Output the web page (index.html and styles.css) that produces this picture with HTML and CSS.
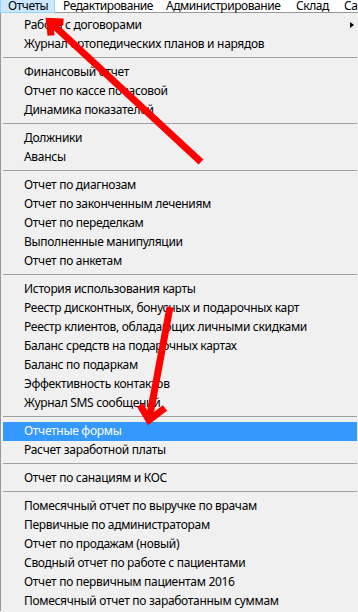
FILE: index.html
```html
<!DOCTYPE html>
<html lang="ru">
<head>
    <meta charset="UTF-8">
    <meta name="viewport" content="width=device-width, initial-scale=1.0">
    <title>Отчеты</title>
    <link rel="stylesheet" href="styles.css">
</head>
<body>
    <div class="screen">
        <div class="menubar">
            <div class="top-item active">Отчеты</div>
            <div class="top-item edit">Редактирование</div>
            <div class="top-item admin">Администрирование</div>
            <div class="top-item store">Склад</div>
            <div class="top-item">Сайт</div>
        </div>

        <div class="dropdown">
            <div class="item sub">Работа с договорами</div>
            <div class="item">Журнал ортопедических планов и нарядов</div>
            <div class="sep"></div>
            <div class="item">Финансовый отчет</div>
            <div class="item">Отчет по кассе почасовой</div>
            <div class="item">Динамика показателей</div>
            <div class="sep"></div>
            <div class="item">Должники</div>
            <div class="item">Авансы</div>
            <div class="sep"></div>
            <div class="item">Отчет по диагнозам</div>
            <div class="item">Отчет по законченным лечениям</div>
            <div class="item">Отчет по переделкам</div>
            <div class="item">Выполненные манипуляции</div>
            <div class="item">Отчет по анкетам</div>
            <div class="sep"></div>
            <div class="item">История использования карты</div>
            <div class="item">Реестр дисконтных, бонусных и подарочных карт</div>
            <div class="item">Реестр клиентов, обладающих личными скидками</div>
            <div class="item">Баланс средств на подарочных картах</div>
            <div class="item">Баланс по подаркам</div>
            <div class="item">Эффективность контактов</div>
            <div class="item">Журнал SMS сообщений</div>
            <div class="sep"></div>
            <div class="item selected">Отчетные формы</div>
            <div class="item">Расчет заработной платы</div>
            <div class="sep"></div>
            <div class="item">Отчет по санациям и КОС</div>
            <div class="sep"></div>
            <div class="item">Помесячный отчет по выручке по врачам</div>
            <div class="item">Первичные по администраторам</div>
            <div class="item">Отчет по продажам (новый)</div>
            <div class="item">Сводный отчет по работе с пациентами</div>
            <div class="item">Отчет по первичным пациентам 2016</div>
            <div class="item">Помесячный отчет по заработанным суммам</div>
        </div>

        <!-- red pointer arrows drawn over the menu -->
        <svg class="arrows" width="358" height="612" viewBox="0 0 358 612">
            <g fill="none" stroke="#ff0000" stroke-width="7">
                <line x1="201" y1="162" x2="49.5" y2="21.5"/>
                <polyline points="63.5,22 49.5,21.5 51,35.5" stroke-linejoin="miter"/>
                <line x1="170" y1="307" x2="149" y2="420"/>
                <polyline points="140,405 149,420 165,408" stroke-linejoin="miter"/>
            </g>
        </svg>
    </div>
</body>
</html>
```

FILE: styles.css
```css
body {
    margin: 0;
    overflow: hidden;
    background-color: #f0f0f0;
    font-family: "Noto Sans", "Open Sans", sans-serif;
    font-size: 12px;
    letter-spacing: -0.3px;
    color: #000;
}
.screen {
    position: relative;
    width: 358px;
    height: 612px;
    overflow: hidden;
}
.menubar {
    display: flex;
    height: 15px;
    margin-top: -2px;
    background-color: #fff;
    box-shadow: inset 0 -1px 0 #979797;
    white-space: nowrap;
    letter-spacing: -0.45px;
}
.top-item {
    flex: none;
    box-sizing: border-box;
    padding: 0 0 0 7px;
    border: 1px solid transparent;
    border-bottom: none;
    line-height: 14px;
}
.top-item.active {
    width: 55px;
    background-color: #cce8ff;
    border: 1px solid #99d1ff;
    line-height: 13px;
}
.top-item.edit {
    width: 103px;
}
.top-item.admin {
    width: 130px;
}
.top-item.store {
    width: 48px;
}
.dropdown {
    width: 354px;
    padding: 3px 2px 0 2px;
    border-left: 1px solid #979797;
    border-right: 1px solid #979797;
    background-color: #f0f0f0;
}
.item {
    display: flex;
    justify-content: space-between;
    align-items: center;
    height: 17px;
    line-height: 17px;
    padding: 0 3px 2px 21px;
    white-space: nowrap;
}
.item.sub::after {
    content: "";
    border-left: 4px solid #000;
    border-top: 3.5px solid transparent;
    border-bottom: 3.5px solid transparent;
    margin-top: 1px;
}
.item.selected {
    background-color: #3399ff;
    color: #fff;
}
.sep {
    height: 1px;
    margin: 3px 0 5px 0;
    background-color: #a0a0a0;
}
.arrows {
    position: absolute;
    left: 0;
    top: 0;
    pointer-events: none;
}
```
